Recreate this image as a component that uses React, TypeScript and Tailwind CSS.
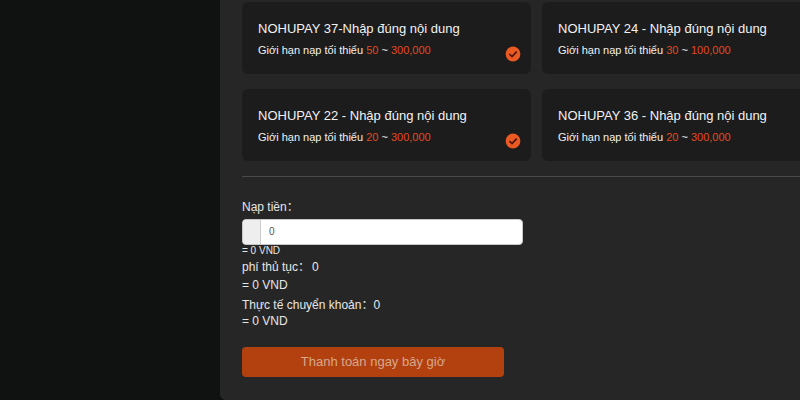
import { useState } from 'react'

const channels = [
  { id: 37, name: 'NOHUPAY 37-Nhập đúng nội dung', min: '50', max: '300,000' },
  { id: 24, name: 'NOHUPAY 24 - Nhập đúng nội dung', min: '30', max: '100,000' },
  { id: 22, name: 'NOHUPAY 22 - Nhập đúng nội dung', min: '20', max: '300,000' },
  { id: 36, name: 'NOHUPAY 36 - Nhập đúng nội dung', min: '20', max: '300,000' },
]

function CheckIcon() {
  return (
    <svg viewBox="0 0 16 16" className="w-4 h-4" aria-hidden="true">
      <circle cx="8" cy="8" r="7.4" fill="#ea5a22" />
      <path d="M4.4 8 7 10.5 11.7 5.7" fill="none" stroke="#4a1408" strokeWidth="1.7" />
    </svg>
  )
}

function ChannelCard({ channel }: { channel: (typeof channels)[number] }) {
  return (
    <li className="relative h-18 rounded-md bg-[#1c1c1c] px-4 pt-4">
      <p className="text-[13px] leading-[22px] text-[#f2f2f2]">{channel.name}</p>
      <p className="text-[11px] leading-5 text-[#f2f2f2]">
        Giới hạn nạp tối thiểu <span className="text-[#e04a20]">{channel.min}</span> ~{' '}
        <span className="text-[#e04a20]">{channel.max}</span>
      </p>
      <span className="absolute right-2.5 bottom-3">
        <CheckIcon />
      </span>
    </li>
  )
}

export default function App() {
  const [amount, setAmount] = useState('0')

  return (
    <div className="flex min-h-screen overflow-hidden bg-[#101212] font-['Liberation_Sans','Noto_Sans_CJK_SC',sans-serif] text-[#e6e6e6]">
      <aside className="w-55 shrink-0" />
      <main className="min-w-0 flex-1 overflow-hidden rounded-bl-md bg-[#262626] pt-0.5 pl-[22px]">
        <ul className="grid grid-cols-[289px_289px] gap-x-[11px] gap-y-[15px]">
          {channels.map((channel) => (
            <ChannelCard key={channel.id} channel={channel} />
          ))}
        </ul>

        <hr className="mt-[15px] border-[#4a4a4a]" />

        <form className="mt-5 text-xs" onSubmit={(e) => e.preventDefault()}>
          <label htmlFor="amount" className="block leading-5">
            Nạp tiền：
          </label>
          <div className="mt-0.5 flex h-[26px] w-[281px] overflow-hidden rounded-sm border border-[#c8c8c8] bg-white">
            <span className="w-[18px] border-r border-[#cccccc] bg-[#eeeeee]" />
            <input
              id="amount"
              type="text"
              value={amount}
              onChange={(e) => setAmount(e.target.value)}
              className="min-w-0 flex-1 px-2 text-[10px] text-[#555555] outline-none"
            />
          </div>
          <p className="text-[10px] leading-3">= 0 VND</p>
          <p className="leading-5">
            phí thủ tục：<span className="ml-0.5">0</span>
          </p>
          <p className="leading-4">= 0 VND</p>
          <p className="mt-1 leading-4">
            Thực tế chuyển khoản：<span>0</span>
          </p>
          <p className="leading-4">= 0 VND</p>
          <button
            type="submit"
            className="mt-[18px] block h-[30px] w-[262px] rounded-sm bg-[#b2410f] text-[13px] text-[#d7a78d]"
          >
            Thanh toán ngay bây giờ
          </button>
        </form>
      </main>
    </div>
  )
}
